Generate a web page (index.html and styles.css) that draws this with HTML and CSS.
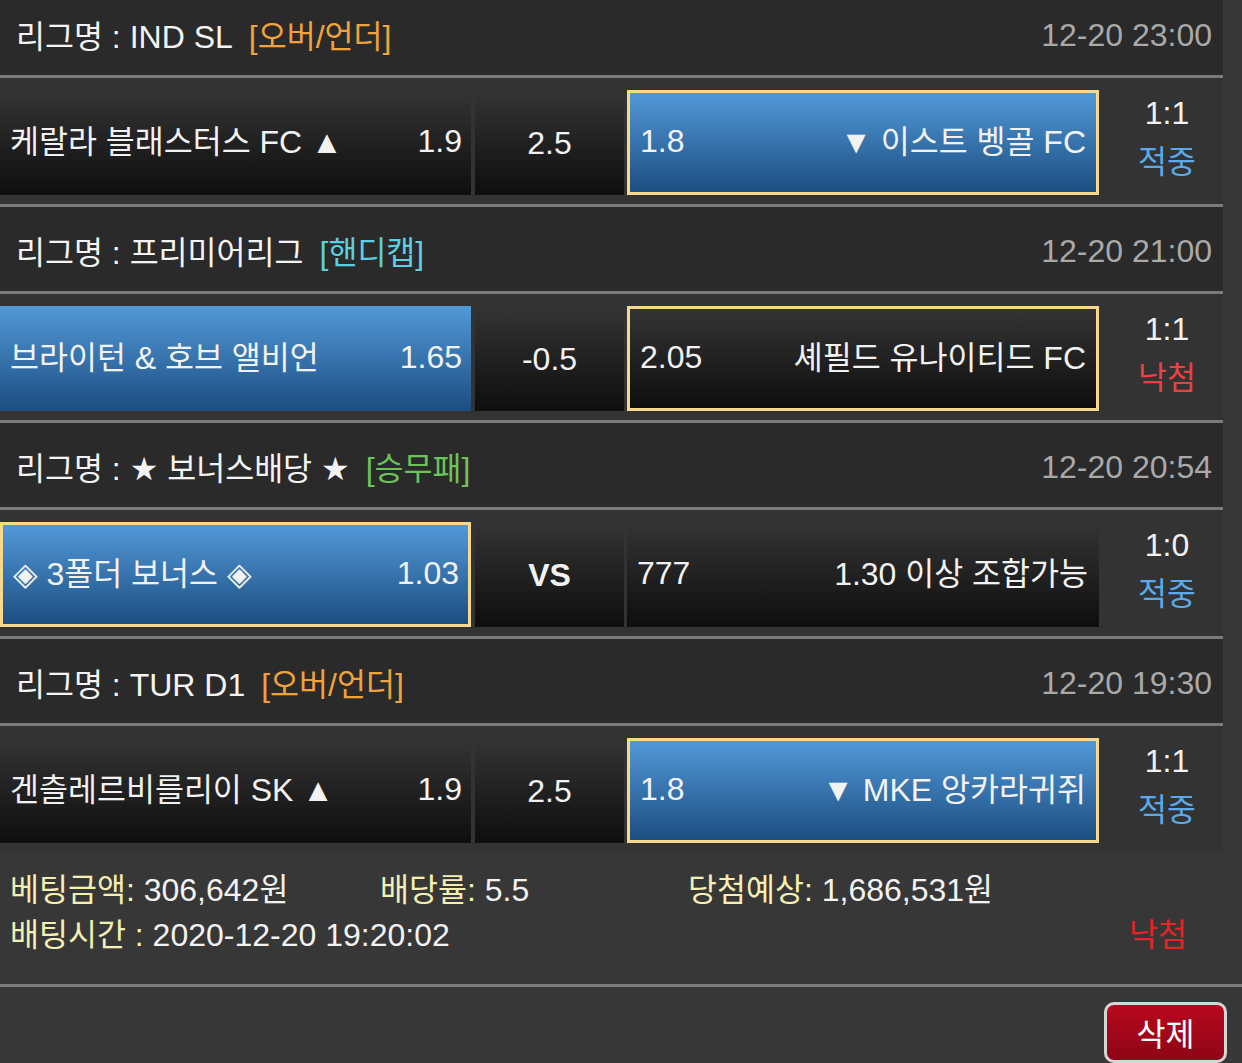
FILE: index.html
```html
<!DOCTYPE html>
<html lang="ko">
<head>
<meta charset="utf-8">
<title>배팅내역</title>
<link rel="stylesheet" href="styles.css">
</head>
<body>
<div class="list">
  <div class="league">
    <div class="lname"><span class="k">리그명</span> : IND SL<span class="tag over">[<span class="k">오버</span>/<span class="k">언더</span>]</span></div>
    <div class="ldate">12-20 23:00</div>
  </div>
  <div class="match">
    <div class="cell side home"><span><span class="k">케랄라 블래스터스</span> FC ▲</span><span>1.9</span></div>
    <div class="cell mid">2.5</div>
    <div class="cell side away win pick"><span>1.8</span><span>▼ <span class="k">이스트 벵골</span> FC</span></div>
    <div class="score"><div>1:1</div><div class="k hit">적중</div></div>
  </div>

  <div class="league">
    <div class="lname"><span class="k">리그명</span> : <span class="k">프리미어리그</span><span class="tag handi">[<span class="k">핸디캡</span>]</span></div>
    <div class="ldate">12-20 21:00</div>
  </div>
  <div class="match">
    <div class="cell side home win"><span><span class="k">브라이턴</span> &amp; <span class="k">호브 앨비언</span></span><span>1.65</span></div>
    <div class="cell mid">-0.5</div>
    <div class="cell side away pick"><span>2.05</span><span><span class="k">셰필드 유나이티드</span> FC</span></div>
    <div class="score"><div>1:1</div><div class="k miss">낙첨</div></div>
  </div>

  <div class="league">
    <div class="lname"><span class="k">리그명</span> : ★ <span class="k">보너스배당</span> ★<span class="tag wdl">[<span class="k">승무패</span>]</span></div>
    <div class="ldate">12-20 20:54</div>
  </div>
  <div class="match">
    <div class="cell side home win pick"><span>◈ 3<span class="k">폴더 보너스</span> ◈</span><span>1.03</span></div>
    <div class="cell mid vs">VS</div>
    <div class="cell side away"><span>777</span><span>1.30 <span class="k">이상 조합가능</span></span></div>
    <div class="score"><div>1:0</div><div class="k hit">적중</div></div>
  </div>

  <div class="league">
    <div class="lname"><span class="k">리그명</span> : TUR D1<span class="tag over">[<span class="k">오버</span>/<span class="k">언더</span>]</span></div>
    <div class="ldate">12-20 19:30</div>
  </div>
  <div class="match">
    <div class="cell side home"><span><span class="k">겐츨레르비를리이</span> SK ▲</span><span>1.9</span></div>
    <div class="cell mid">2.5</div>
    <div class="cell side away win pick"><span>1.8</span><span>▼ MKE <span class="k">앙카라귀쥐</span></span></div>
    <div class="score"><div>1:1</div><div class="k hit">적중</div></div>
  </div>
</div>

<div class="summary">
  <div><span class="lbl"><span class="k">베팅금액</span>:</span> 306,642<span class="k">원</span></div>
  <div><span class="lbl"><span class="k">배당률</span>:</span> 5.5</div>
  <div><span class="lbl"><span class="k">당첨예상</span>:</span> 1,686,531<span class="k">원</span></div>
  <div class="span2"><span class="lbl"><span class="k">배팅시간</span> :</span> 2020-12-20 19:20:02</div>
  <div class="result k">낙첨</div>
</div>

<div class="actions">
  <button class="del" type="button"><span class="k">삭제</span></button>
</div>
</body>
</html>
```

FILE: styles.css
```css
* {
  box-sizing: border-box;
}

html, body {
  margin: 0;
  padding: 0;
}

body {
  background: #373737;
  color: #f2f2f2;
  font-family: "Liberation Sans", "DejaVu Sans", "Noto Sans CJK KR", sans-serif;
  font-size: 32px;
  overflow: hidden;
}

.k {
  font-family: "Noto Sans CJK KR", sans-serif;
  font-size: 31.5px;
}

.list {
  width: 1223px;
  margin-top: -9px;
}

.league {
  height: 87px;
  display: flex;
  align-items: center;
  justify-content: space-between;
  padding: 4px 11px 0 16px;
  background: #2a2a2a;
  border-bottom: 3px solid #7b7b7b;
  line-height: 40px;
  white-space: nowrap;
}

.lname {
  color: #f4f4f4;
}

.tag {
  margin-left: 16px;
}

.tag.over { color: #f0a23c; }
.tag.handi { color: #5ccfe0; }
.tag.wdl { color: #6cc35a; }

.ldate {
  color: #a9a9a9;
}

.match {
  height: 129px;
  display: flex;
  padding: 12px 0 9px;
  background: #333333;
  border-bottom: 3px solid #7b7b7b;
  line-height: 40px;
  white-space: nowrap;
}

.match:last-child {
  height: 126px;
  border-bottom: 0;
}

.cell {
  display: flex;
  align-items: center;
  background: linear-gradient(#343434, #0e0e0e);
}

.side {
  justify-content: space-between;
  padding-bottom: 4px;
}

.home {
  width: 471px;
  padding-left: 10px;
  padding-right: 9px;
}

.away {
  width: 472px;
  padding-left: 10px;
  padding-right: 11px;
}

.mid {
  width: 149px;
  margin: 0 3px 0 4px;
  justify-content: center;
}

.vs {
  font-weight: bold;
}

.win {
  background: linear-gradient(#5299d8, #1c4d81);
}

.pick {
  border: 3px solid #f6d98c;
}

.away.pick {
  padding-right: 10px;
}

.score {
  flex: 1;
  padding-left: 12px;
  text-align: center;
  line-height: 46px;
}

.score > div {
  height: 46px;
}

.hit { color: #5ba9e8; }
.miss { color: #e84242; }

.summary {
  display: grid;
  grid-template-columns: 370px 308px 1fr;
  grid-auto-rows: 45px;
  height: 132px;
  padding: 13px 55px 0 10px;
  line-height: 45px;
  white-space: nowrap;
}

.lbl {
  color: #f4efb2;
}

.span2 {
  grid-column: 1 / 3;
}

.result {
  justify-self: end;
  color: #e32424;
}

.actions {
  display: flex;
  justify-content: flex-end;
  padding: 15px 15px 0;
  border-top: 3px solid #7b7b7b;
}

.del {
  width: 123px;
  height: 61px;
  border: 3px solid #d6d6d6;
  border-radius: 10px;
  background: linear-gradient(#b8081f, #8e0515);
  color: #ffffff;
  font-family: "Noto Sans CJK KR", sans-serif;
  padding: 0;
  line-height: 1;
}
```
